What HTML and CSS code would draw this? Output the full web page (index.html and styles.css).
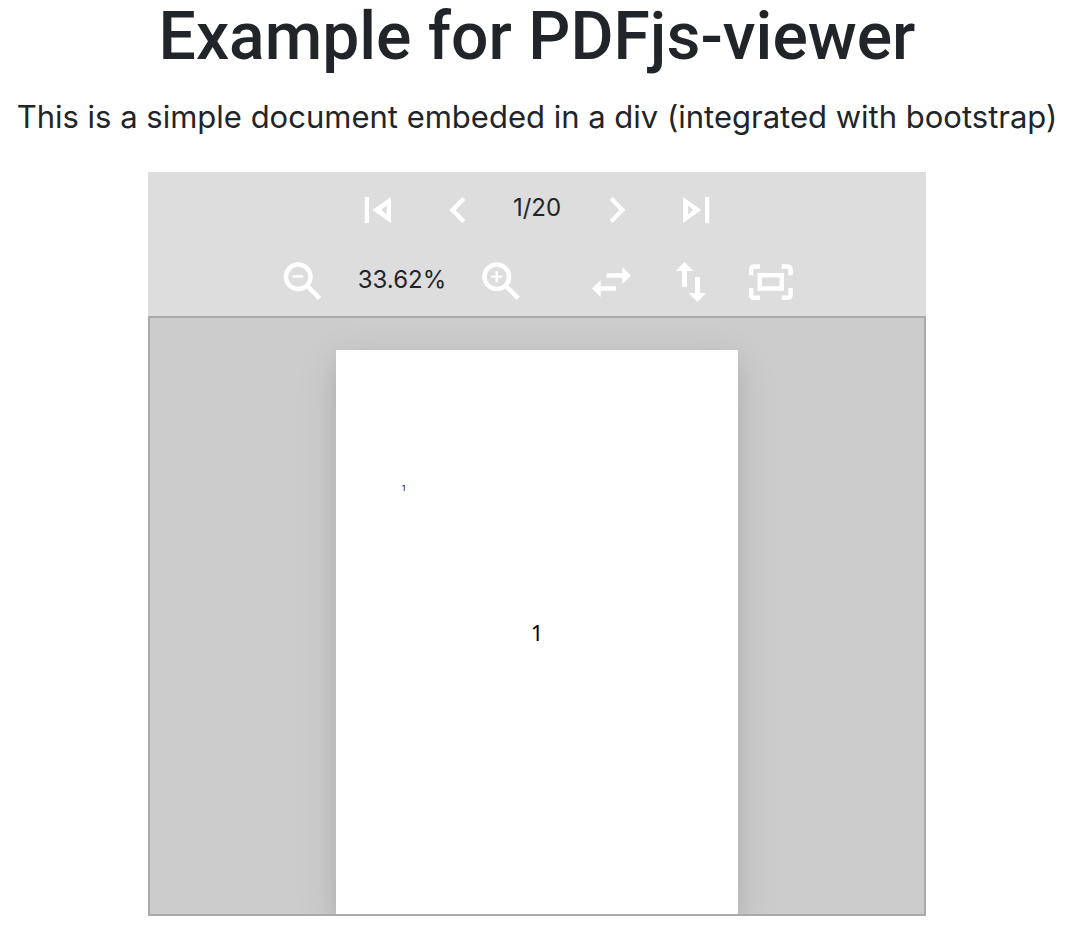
FILE: index.html
```html
<!DOCTYPE html>
<html lang="en">
<head>
<meta charset="utf-8">
<meta name="viewport" content="width=device-width, initial-scale=1">
<title>Example for PDFjs-viewer</title>
<link rel="stylesheet" href="styles.css">
</head>
<body>
<header class="intro">
  <h1 class="title">Example for PDFjs-viewer</h1>
  <p class="lead">This is a simple document embeded in a div (integrated with bootstrap)</p>
</header>
<main class="viewer">
  <div class="toolbar">
    <div class="tool-row">
      <button class="tool" type="button" aria-label="First page"><svg class="icon" viewBox="0 0 80 72"><path fill-rule="evenodd" d="M27.7 25H32V51H27.7ZM35.3 38 54 25V51ZM44.3 38 49.7 42.5V33.3Z"/></svg></button>
      <button class="tool" type="button" aria-label="Previous page"><svg class="icon" viewBox="0 0 80 72"><path d="M45.3 25 48.3 28 38.7 38 48.3 48 45.3 51 32.5 38Z"/></svg></button>
      <span class="page-count">1/20</span>
      <button class="tool" type="button" aria-label="Next page"><svg class="icon" viewBox="0 0 80 72"><path d="M35.7 25 48.3 38 35.7 51 32.7 48 42.3 38 32.7 28Z"/></svg></button>
      <button class="tool" type="button" aria-label="Last page"><svg class="icon" viewBox="0 0 80 72"><path fill-rule="evenodd" d="M26 25 44.3 38 26 51ZM31 33.3V42.5L36.3 38ZM48 25H52.3V51H48Z"/></svg></button>
    </div>
    <div class="tool-row">
      <button class="tool" type="button" aria-label="Zoom out"><svg class="icon line" viewBox="0 0 80 72"><circle cx="36.2" cy="32.8" r="12.3"/><path d="M44.8 41.5 57.6 54.3"/><path class="thin" d="M30.5 32.4H41.3"/></svg></button>
      <span class="zoom-level">33.62%</span>
      <button class="tool" type="button" aria-label="Zoom in"><svg class="icon line" viewBox="0 0 80 72"><circle cx="34.8" cy="32.8" r="12.3"/><path d="M43.4 41.5 56.2 54.3"/><path class="thin" d="M29.2 32.6H40.4M34.8 27V38.2"/></svg></button>
      <span class="divider"></span>
      <button class="tool" type="button" aria-label="Fit width"><svg class="icon" viewBox="0 0 80 72"><path d="M34.7 29.3H50.3V23L59 31.5 50.3 40V33.7H34.7ZM44 42.3H28.7V36L20 44.5 28.7 53V46.7H44Z"/></svg></button>
      <button class="tool" type="button" aria-label="Fit height"><svg class="icon" viewBox="0 0 80 72"><path d="M30 42.7V27H23.7L32.5 18 41.3 27H35V42.7ZM43 33V49H36.7L45.4 58 54 49H48V33Z"/></svg></button>
      <button class="tool" type="button" aria-label="Fit page"><svg class="icon frame" viewBox="0 0 80 72"><path d="M19.2 31.3V25.5Q19.2 22.5 22.2 22.5H28M49.7 22.5H55.5Q58.5 22.5 58.5 25.5V31.3M58.5 44V50.8Q58.5 53.8 55.5 53.8H49.7M28 53.8H22.2Q19.2 53.8 19.2 50.8V44"/><path d="M27.8 31.2H49.8V44.6H27.8Z"/></svg></button>
    </div>
  </div>
  <section class="document" aria-label="Document">
    <article class="sheet">
      <span class="sheet-mark">1</span>
      <span class="sheet-number">1</span>
    </article>
  </section>
</main>
</body>
</html>
```
FILE: styles.css
```css
*, *::before, *::after { box-sizing: border-box; }

body {
  margin: 0;
  padding-right: 8px;
  background: #fff;
  color: #212529;
  font-family: Inter, "Liberation Sans", sans-serif;
}

.intro { text-align: center; }

.title {
  margin: 0;
  font-family: Roboto, "Liberation Sans", sans-serif;
  font-size: 66px;
  font-weight: 500;
  line-height: 74px;
}

.lead {
  margin: 18px 0 30px;
  font-size: 31px;
  line-height: 50px;
}

.viewer {
  max-width: 778px;
  margin: 0 auto;
}

.toolbar { background: #ddd; }

.tool-row {
  display: flex;
  justify-content: center;
  height: 72px;
}

.tool {
  width: 80px;
  padding: 0;
  border: 0;
  background: none;
  cursor: pointer;
}

.icon {
  display: block;
  width: 80px;
  height: 72px;
  fill: #fff;
}

.line, .frame {
  fill: none;
  stroke: #fff;
  stroke-width: 4.5;
}

.thin { stroke-width: 2.4; }

.page-count, .zoom-level {
  width: 80px;
  font-size: 24px;
  line-height: 72px;
  text-align: center;
}

.zoom-level { width: 120px; }

.divider { width: 30px; }

.document {
  height: calc(100vh - 336px);
  min-height: 240px;
  padding: 32px;
  overflow: hidden;
  border: 2px solid #aaa;
  background: #ccc;
}

.sheet {
  display: grid;
  grid-template-rows: 1fr;
  max-width: 402px;
  aspect-ratio: 402 / 568;
  margin: 0 auto;
  background: #fff;
  box-shadow: 0 8px 16px rgba(0, 0, 0, 0.05), 0 12px 40px rgba(0, 0, 0, 0.12);
  color: #000;
}

.sheet-mark, .sheet-number { grid-area: 1 / 1; }

.sheet-mark {
  padding: 132px 0 0 66px;
  font-size: 8px;
  line-height: 12px;
}

.sheet-number {
  align-self: center;
  justify-self: center;
  padding-bottom: 4px;
  font-family: "Noto Sans", sans-serif;
  font-size: 22px;
  line-height: 24px;
}
```
